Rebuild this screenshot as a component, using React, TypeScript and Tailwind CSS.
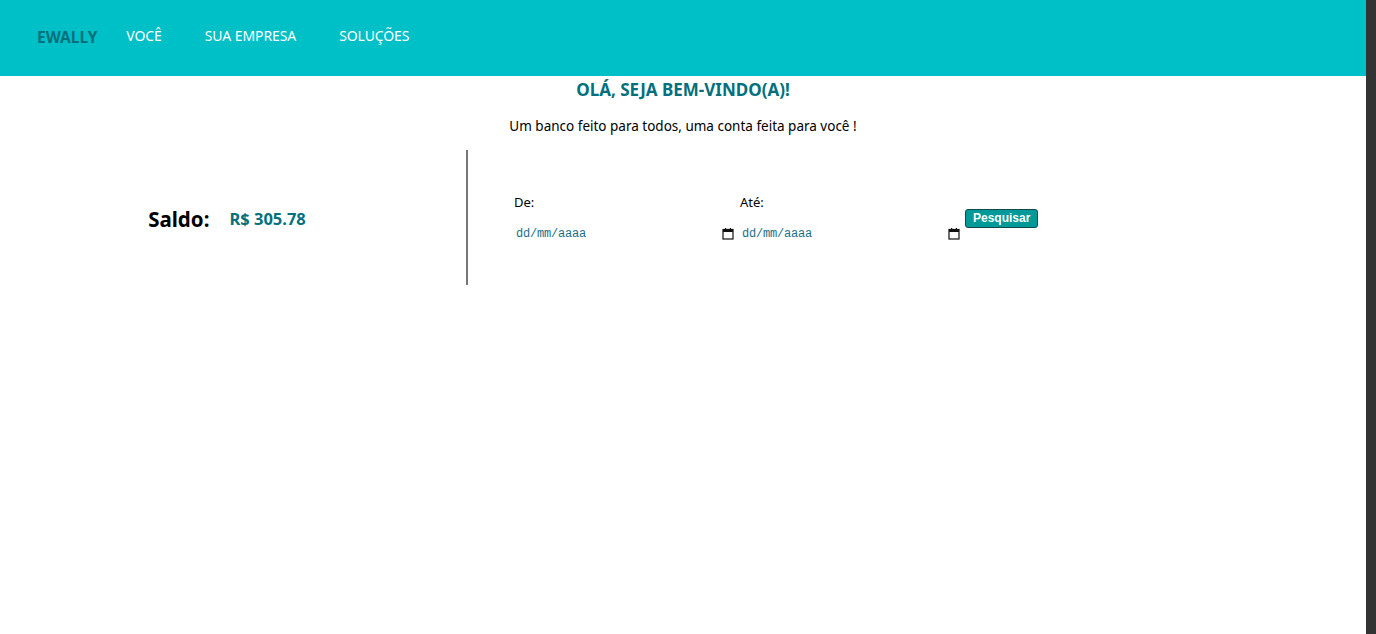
const font = { fontFamily: '"Noto Sans", "Open Sans", sans-serif' }

const CalendarIcon = () => (
  <svg width="12" height="12" viewBox="0 0 12 12" className="shrink-0">
    <rect x="1" y="1.5" width="10" height="9.5" fill="none" stroke="#111" strokeWidth="1.2" />
    <rect x="1" y="1.5" width="10" height="2.5" fill="#111" />
    <rect x="3" y="0" width="1.2" height="2" fill="#111" />
    <rect x="7.8" y="0" width="1.2" height="2" fill="#111" />
  </svg>
)

const DateField = () => (
  <div className="flex items-center w-[222px] h-5 pl-[2px] pr-[2px]">
    <span className="text-[12px] text-[#1b6f8a] tracking-[-0.2px]" style={{ fontFamily: '"Liberation Mono", monospace' }}>
      dd/mm/aaaa
    </span>
    <div className="ml-auto">
      <CalendarIcon />
    </div>
  </div>
)

export default function App() {
  return (
    <div className="flex w-[1376px] h-[634px] overflow-hidden bg-white" style={font}>
      <div className="flex-1 flex flex-col">
        <header className="h-[76px] bg-[#00c0c7] flex items-center pl-[37px] pb-[6px]">
          <span className="text-[15.5px] font-bold text-[#03707c] mt-[5px]">EWALLY</span>
          <nav className="flex gap-[43px] ml-[29px] text-[14px] tracking-[-0.1px] text-white">
            <a>VOCÊ</a>
            <a>SUA EMPRESA</a>
            <a>SOLUÇÕES</a>
          </nav>
        </header>

        <h1 className="mt-[2px] text-center text-[17px] font-bold text-[#03707c] leading-6">
          OLÁ, SEJA BEM-VINDO(A)!
        </h1>
        <p className="mt-[14px] text-center text-[13.5px] text-black leading-5">
          Um banco feito para todos, uma conta feita para você !
        </p>

        <div className="flex mt-[14px] h-[135px]">
          <div className="w-[466px] flex items-center justify-center gap-5 pr-[12px] pt-[3px]">
            <span className="text-[20.5px] font-bold text-black">Saldo:</span>
            <span className="text-[16.5px] font-bold text-[#03707c]">R$ 305.78</span>
          </div>
          <div className="w-[2px] bg-[#777]" />
          <div className="flex items-center pl-[46px]">
            <div className="flex flex-col">
              <label className="text-[13px] text-black leading-5">De:</label>
              <div className="mt-[12px]">
                <DateField />
              </div>
            </div>
            <div className="flex flex-col ml-[4px]">
              <label className="text-[13px] text-black leading-5">Até:</label>
              <div className="mt-[12px]">
                <DateField />
              </div>
            </div>
            <button
              className="ml-[3px] mt-[1px] h-[19px] px-[7px] rounded-[3px] bg-[#009999] border border-[#114a4a] text-white text-[12px] font-bold leading-none"
              style={{ fontFamily: '"Liberation Sans", Arial, sans-serif' }}
            >
              Pesquisar
            </button>
          </div>
        </div>
      </div>
      <div className="w-[10px] bg-[#333333]" />
    </div>
  )
}
